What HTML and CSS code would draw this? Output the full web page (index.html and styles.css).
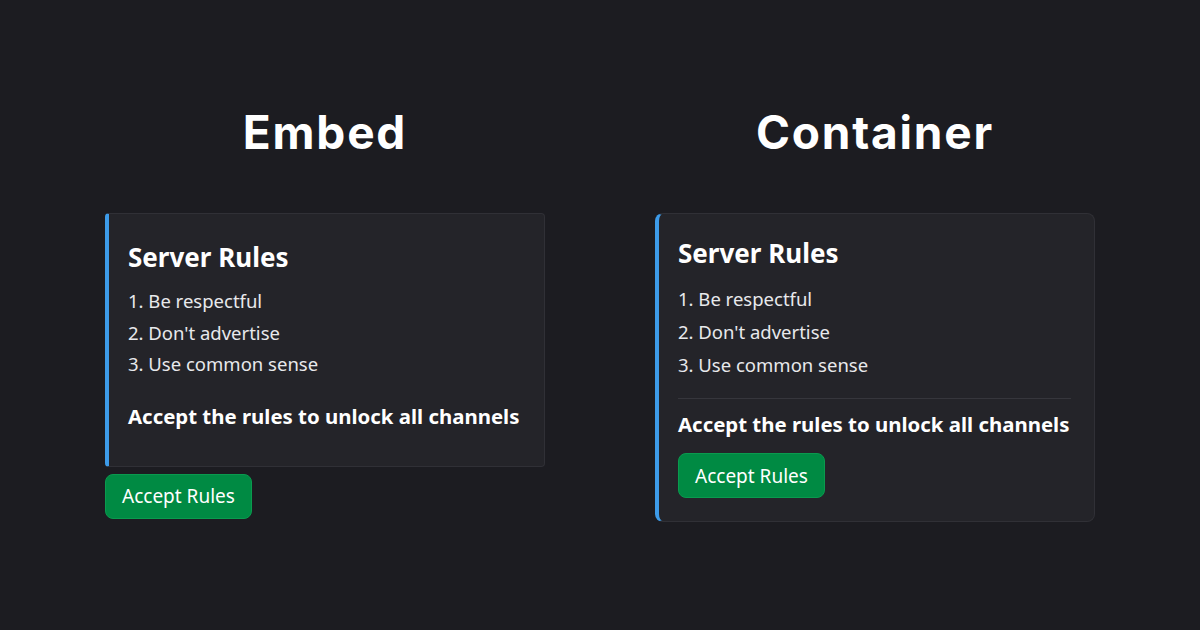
FILE: index.html
```html
<!DOCTYPE html>
<html lang="en">
<head>
  <meta charset="UTF-8">
  <title>Embed vs Container</title>
  <link rel="stylesheet" href="styles.css">
</head>
<body>
  <div class="compare">
    <div class="column">
      <h1>Embed</h1>
      <div class="embed">
        <h2>Server Rules</h2>
        <ol class="rules">
          <li>1. Be respectful</li>
          <li>2. Don't advertise</li>
          <li>3. Use common sense</li>
        </ol>
        <p class="note">Accept the rules to unlock all channels</p>
      </div>
      <button class="accept">Accept Rules</button>
    </div>

    <div class="column">
      <h1>Container</h1>
      <div class="box">
        <h2>Server Rules</h2>
        <ol class="rules">
          <li>1. Be respectful</li>
          <li>2. Don't advertise</li>
          <li>3. Use common sense</li>
        </ol>
        <hr class="divider">
        <p class="note">Accept the rules to unlock all channels</p>
        <button class="accept">Accept Rules</button>
      </div>
    </div>
  </div>
</body>
</html>
```

FILE: styles.css
```css
body {
  margin: 0;
  height: 630px;
  background: #1c1c21;
  font-family: "Noto Sans", "Open Sans", sans-serif;
  color: #f2f3f5;
}
.compare {
  display: flex;
  justify-content: center;
  gap: 110px;
  padding-top: 104px;
}
.column {
  width: 440px;
  display: flex;
  flex-direction: column;
  align-items: flex-start;
}
h1 {
  align-self: stretch;
  margin: 0 0 53px;
  text-align: center;
  font-family: "Inter", sans-serif;
  font-size: 46px;
  line-height: 56px;
  font-weight: 700;
  letter-spacing: 1.8px;
  color: #ffffff;
}

/* shared card look: dark panel with a blue accent on the left */
.embed, .box {
  box-sizing: border-box;
  width: 440px;
  background: #242429;
  border: 1px solid #303036;
  border-left: 4px solid #3d9be9;
}
.embed {
  border-radius: 4px;
  padding: 27px 23px 36px 19px;
}
.box {
  border-radius: 8px;
  padding: 23px 23px 23px 19px;
}
h2 {
  margin: 0;
  font-size: 26px;
  line-height: 32px;
  font-weight: 700;
  color: #ffffff;
}
.rules {
  list-style: none;
  margin: 12px 0 0;
  padding: 0;
}
.rules li {
  font-size: 18.5px;
  line-height: 31.5px;
  color: #e8e9ec;
}
.box .rules {
  margin-top: 12.5px;
}
.box .rules li {
  line-height: 33px;
}
.note {
  margin: 22px 0 0;
  font-size: 20.4px;
  line-height: 28px;
  font-weight: 700;
  white-space: nowrap;
  color: #ffffff;
}
.divider {
  border: 0;
  border-top: 1px solid #36363c;
  margin: 17.5px 0 0;
}
.box .note {
  margin-top: 10.5px;
}
.accept {
  margin-top: 7px;
  padding: 0 16px;
  height: 45px;
  background: #008a43;
  border: 1px solid #0a9a4e;
  border-radius: 8px;
  color: #ffffff;
  font-family: "Noto Sans", sans-serif;
  font-size: 19px;
}
.box .accept {
  margin-top: 15.5px;
}
```
